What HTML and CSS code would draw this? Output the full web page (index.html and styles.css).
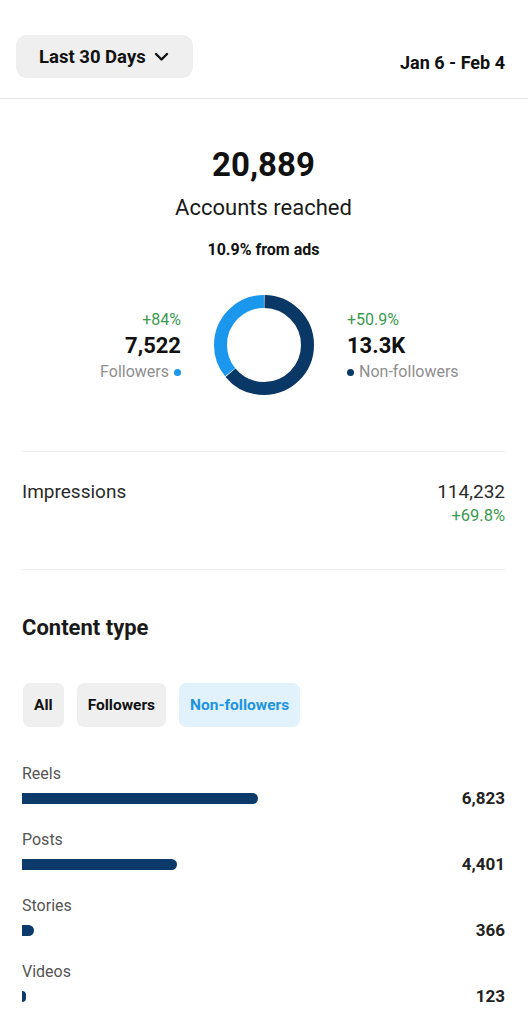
FILE: index.html
```html
<!DOCTYPE html>
<html>
<head>
<meta charset="utf-8">
<link rel="stylesheet" href="styles.css">
</head>
<body>
<header class="header">
  <button class="range">Last 30 Days
    <svg class="chev" width="15" height="10" viewBox="0 0 15 10"><path d="M2 2 L7.5 7.5 L13 2" fill="none" stroke="#111" stroke-width="2.4" stroke-linecap="round" stroke-linejoin="round"/></svg>
  </button>
  <div class="dates">Jan 6 - Feb 4</div>
</header>
<main class="main">
  <section class="reach">
    <div class="big">20,889</div>
    <div class="sub">Accounts reached</div>
    <div class="ads">10.9% from ads</div>
    <div class="split">
      <div class="side left">
        <div class="pct">+84%</div>
        <div class="num">7,522</div>
        <div class="lab">Followers <span class="dot light"></span></div>
      </div>
      <svg class="donut" width="100" height="100" viewBox="0 0 100 100">
        <g transform="rotate(-90 50 50)">
          <circle cx="50" cy="50" r="43.5" fill="none" stroke="#0a3866" stroke-width="13" stroke-dasharray="174.1 99.2" stroke-dashoffset="-0.5"/>
          <circle cx="50" cy="50" r="43.5" fill="none" stroke="#1b98ee" stroke-width="13" stroke-dasharray="97.6 175.7" stroke-dashoffset="-175.2"/>
        </g>
      </svg>
      <div class="side right">
        <div class="pct">+50.9%</div>
        <div class="num">13.3K</div>
        <div class="lab"><span class="dot dark"></span> Non-followers</div>
      </div>
    </div>
  </section>
  <section class="impr">
    <div class="impr-lab">Impressions</div>
    <div class="impr-val">
      <div class="impr-num">114,232</div>
      <div class="impr-pct">+69.8%</div>
    </div>
  </section>
  <section class="content">
    <h2 class="title">Content type</h2>
    <div class="tabs">
      <div class="tab">All</div>
      <div class="tab">Followers</div>
      <div class="tab active">Non-followers</div>
    </div>
    <div class="rows">
      <div class="item">
        <div class="item-lab">Reels</div>
        <div class="item-row"><div class="bar" style="width:236px"></div><div class="item-val">6,823</div></div>
      </div>
      <div class="item">
        <div class="item-lab">Posts</div>
        <div class="item-row"><div class="bar" style="width:155px"></div><div class="item-val">4,401</div></div>
      </div>
      <div class="item">
        <div class="item-lab">Stories</div>
        <div class="item-row"><div class="bar" style="width:12px"></div><div class="item-val">366</div></div>
      </div>
      <div class="item">
        <div class="item-lab">Videos</div>
        <div class="item-row"><div class="bar" style="width:4px"></div><div class="item-val">123</div></div>
      </div>
    </div>
  </section>
</main>
</body>
</html>
```
FILE: styles.css
```css
* { box-sizing: border-box; }
html, body { margin: 0; padding: 0; background: #fff; }
body {
  width: 528px;
  font-family: Roboto, "Liberation Sans", Arial, sans-serif;
  color: #111;
}
.header {
  display: flex;
  justify-content: space-between;
  align-items: flex-start;
  padding: 35px 23px 20px 16px;
  border-bottom: 1px solid #e6e6e6;
}
.range {
  display: flex;
  align-items: center;
  gap: 8px;
  height: 43px;
  width: 177px;
  padding: 0 0 0 23px;
  border: 0;
  border-radius: 11px;
  background: #efefef;
  font-family: inherit;
  font-size: 18.5px;
  font-weight: 700;
  color: #111;
}
.chev { margin-top: 1px; }
.dates {
  margin-top: 16px;
  font-size: 18px;
  font-weight: 700;
  line-height: 24px;
}
.main { padding: 0 23px 0 22px; }
.reach {
  padding-top: 46px;
  display: flex;
  flex-direction: column;
  align-items: center;
  border-bottom: 1px solid #ececec;
  padding-bottom: 56px;
}
.big { font-size: 33px; font-weight: 700; line-height: 40px; }
.sub { margin-top: 9px; font-size: 22px; line-height: 28px; color: #1a1a1a; }
.ads { margin-top: 18px; font-size: 16px; font-weight: 700; line-height: 20px; }
.split {
  margin-top: 35px;
  display: grid;
  grid-template-columns: 1fr 100px 1fr;
  column-gap: 33px;
  align-items: center;
  width: 100%;
  padding-left: 1px;
}
.side { display: flex; flex-direction: column; padding-top: 2px; }
.left { align-items: flex-end; text-align: right; }
.right { align-items: flex-start; }
.pct { font-size: 16px; line-height: 20px; color: #3b9a50; }
.num { margin-top: 2px; font-size: 22px; font-weight: 700; line-height: 28px; }
.lab { font-size: 16px; line-height: 20px; color: #8e8e8e; display: flex; align-items: center; gap: 5px; margin-top: 2px; }
.dot { display: inline-block; width: 7px; height: 7px; border-radius: 50%; }
.dot.light { background: #1b98ee; }
.dot.dark { background: #0a3866; }
.impr {
  display: flex;
  justify-content: space-between;
  align-items: flex-start;
  padding: 28px 0 43px;
  border-bottom: 1px solid #ececec;
}
.impr-lab { font-size: 19px; line-height: 24px; color: #2a2a2a; }
.impr-val { text-align: right; }
.impr-num { font-size: 19px; line-height: 24px; color: #2a2a2a; }
.impr-pct { margin-top: 2px; font-size: 16.5px; line-height: 20px; color: #3b9a50; }
.content { padding-top: 44px; }
.title { margin: 0; font-size: 22px; font-weight: 700; line-height: 28px; color: #1a1a1a; }
.tabs { margin-top: 41px; display: flex; gap: 13px; padding-left: 1px; }
.tab {
  height: 44px;
  padding: 0 11px;
  display: flex;
  align-items: center;
  border-radius: 7px;
  background: #efefef;
  font-size: 15.5px;
  font-weight: 700;
  color: #111;
}
.tab.active { background: #e1f2fd; color: #1e93df; }
.rows { margin-top: 37px; }
.item { margin-bottom: 22px; }
.item-lab { font-size: 16px; line-height: 20px; color: #555; }
.item-row {
  margin-top: 4px;
  height: 20px;
  display: flex;
  align-items: center;
  justify-content: space-between;
}
.bar { height: 11px; background: #0b3a6b; border-radius: 0 6px 6px 0; }
.item-val { font-size: 17px; font-weight: 700; line-height: 20px; color: #222; }
```
